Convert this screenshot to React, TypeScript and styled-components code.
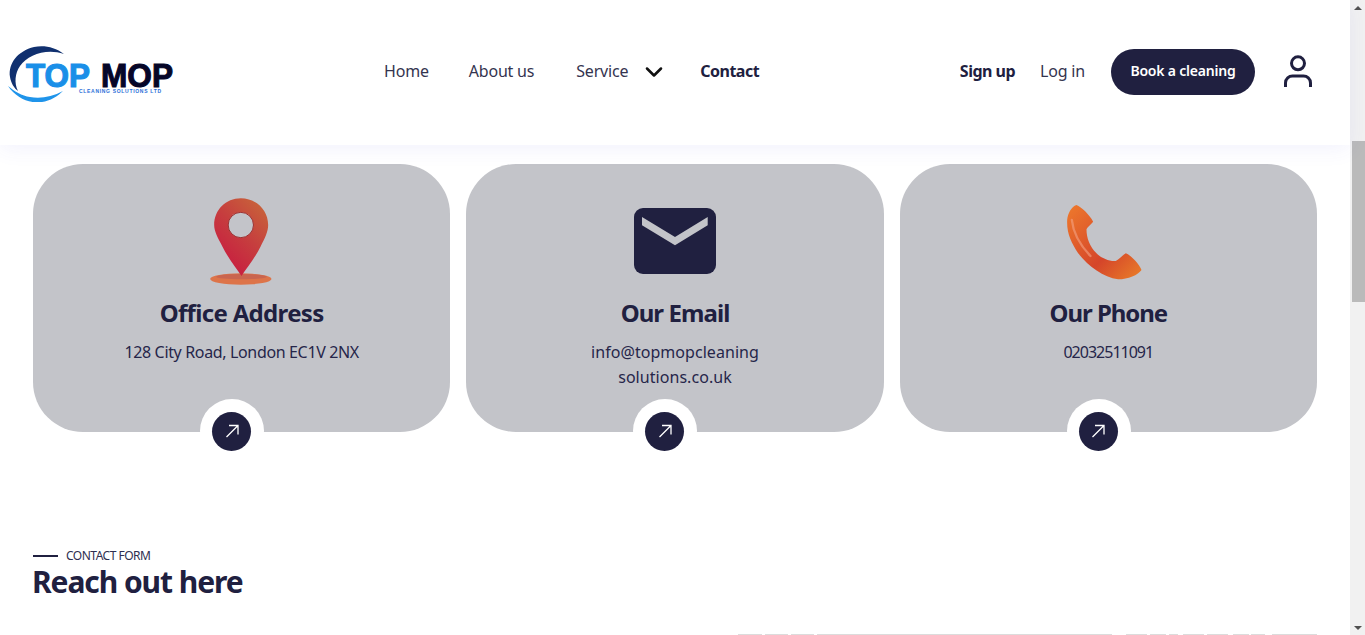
import React from 'react';
import styled, { createGlobalStyle } from 'styled-components';
import { ChevronDown } from 'lucide-react';

const navy = '#202040';
const font = '"Noto Sans", "Open Sans", sans-serif';

const GlobalStyle = createGlobalStyle`
  html, body {
    margin: 0;
    padding: 0;
    height: 100%;
    overflow: hidden;
    background: #fff;
  }
  body {
    font-family: ${font};
    color: ${navy};
  }
`;

const Shell = styled.div`
  display: flex;
  height: 635px;
  width: 1365px;
  overflow: hidden;
`;

const Page = styled.div`
  width: 1350px;
  display: flex;
  flex-direction: column;
`;

const Header = styled.header`
  height: 145px;
  flex: none;
  box-sizing: border-box;
  display: flex;
  align-items: center;
  padding: 0 36px 1px 8px;
  background: #fff;
  box-shadow: 0 4px 20px rgba(70, 70, 220, 0.07);
  position: relative;
  z-index: 2;
`;

const Logo = styled.div`
  width: 170px;
  height: 60px;
  flex: none;
`;

const Nav = styled.nav`
  display: flex;
  align-items: center;
  margin-left: 206px;
`;

const NavItem = styled.a<{ $bold?: boolean; $gap?: number }>`
  font-size: 16px;
  font-weight: ${({ $bold }) => ($bold ? 700 : 400)};
  color: ${({ $bold }) => ($bold ? navy : '#34344f')};
  margin-right: ${({ $gap }) => $gap ?? 41}px;
  padding-bottom: 2px;
  white-space: nowrap;
  letter-spacing: ${({ $bold }) => ($bold ? '-0.5px' : '-0.2px')};
`;

const Chevron = styled(ChevronDown)`
  width: 28px;
  height: 28px;
  margin: 0 32px 1px 12px;
  color: #111;
  stroke-width: 2.2;
`;

const Actions = styled.div`
  margin-left: auto;
  display: flex;
  align-items: center;
`;

const BookButton = styled.button`
  height: 46px;
  width: 144px;
  border: none;
  border-radius: 23px;
  background: ${navy};
  color: #fff;
  font-family: ${font};
  font-size: 14px;
  font-weight: 600;
  letter-spacing: -0.2px;
  margin-left: 26px;
  margin-right: 27px;
  padding: 0 0 4px;
`;

const UserIcon = styled.svg`
  width: 32px;
  height: 34px;
  display: block;
`;

const Cards = styled.section`
  display: flex;
  gap: 16px;
  padding: 19px 33px 0;
`;

const Card = styled.article`
  flex: 1;
  height: 268px;
  border-radius: 50px;
  background: #c3c4c9;
  position: relative;
  display: flex;
  flex-direction: column;
  align-items: center;
  text-align: center;
  padding-top: 32px;
  box-sizing: border-box;
`;

const IconSlot = styled.div`
  height: 92px;
  display: flex;
  align-items: center;
  justify-content: center;
`;

const CardTitle = styled.h3<{ $tracking: number }>`
  margin: 9px 0 0;
  font-size: 24px;
  line-height: 32px;
  font-weight: 700;
  letter-spacing: ${({ $tracking }) => $tracking}px;
`;

const CardText = styled.p<{ $tracking: number }>`
  margin: 11px 0 0;
  font-size: 16px;
  line-height: 25px;
  width: 280px;
  color: #26264a;
  letter-spacing: ${({ $tracking }) => $tracking}px;
`;

const Notch = styled.a`
  position: absolute;
  left: calc(50% - 41.5px);
  top: 235px;
  width: 64px;
  height: 64px;
  box-sizing: border-box;
  padding-right: 1px;
  border-radius: 50%;
  background: #fff;
  display: flex;
  align-items: center;
  justify-content: center;
`;

const NotchInner = styled.span`
  width: 39px;
  height: 39px;
  border-radius: 50%;
  background: ${navy};
  display: flex;
  align-items: center;
  justify-content: center;
`;

const FormHead = styled.section`
  padding: 116px 33px 0;
`;

const Eyebrow = styled.div`
  display: flex;
  align-items: center;
  gap: 8px;
  font-size: 12px;
  line-height: 16px;
  text-transform: uppercase;
  letter-spacing: -0.5px;
  color: #2e2e50;
  &::before {
    content: '';
    width: 25px;
    height: 2px;
    background: ${navy};
  }
`;

const Heading = styled.h2`
  margin: 1px 0 0 -1px;
  font-size: 30px;
  line-height: 34px;
  font-weight: 700;
  letter-spacing: -1.07px;
`;

const FadedRow = styled.div`
  margin: 35px 0 0 738px;
  display: flex;
`;

const FadedBit = styled.span<{ $w: number; $gap: number }>`
  width: ${({ $w }) => $w}px;
  margin-left: ${({ $gap }) => $gap}px;
  height: 1px;
  background: #dcdcdc;
  flex: none;
`;

const Scrollbar = styled.aside`
  width: 15px;
  height: 635px;
  background: #f1f1f1;
  position: relative;
  flex: none;
`;

const Thumb = styled.div`
  position: absolute;
  left: 2px;
  top: 141px;
  width: 13px;
  height: 161px;
  background: #bababa;
`;

const Arrow = styled.span<{ $down?: boolean }>`
  position: absolute;
  left: 4px;
  ${({ $down }) => ($down ? 'bottom: 5px;' : 'top: 6px;')}
  width: 0;
  height: 0;
  border-left: 4px solid transparent;
  border-right: 4px solid transparent;
  ${({ $down }) => ($down ? 'border-top: 4px solid #505050;' : 'border-bottom: 4px solid #505050;')}
`;

const TopMopLogo = () => (
  <svg width="170" height="60" viewBox="8 41 170 60">
    <path d="M64 53C55 46 44 44 34 46C18 50 8 62 10 76C11 82 14 87 18 90C14 82 15 72 20 65C28 54 46 47 64 53Z" fill="#10306f" />
    <path d="M8 85C16 97 30 103 42 101C50 100 58 95 63 90C52 96 40 98 30 96C22 95 14 90 8 85Z" fill="#1f94ea" />
    <text x="26" y="86" fontFamily="Liberation Sans" fontWeight="700" fontSize="33" fill="#1a8fe8" stroke="#1a8fe8" strokeWidth="1.2" textLength="64" lengthAdjust="spacingAndGlyphs">TOP</text>
    <text x="101" y="86" fontFamily="Liberation Sans" fontWeight="700" fontSize="33" fill="#060628" stroke="#060628" strokeWidth="1.1" textLength="72" lengthAdjust="spacingAndGlyphs">MOP</text>
    <text x="79" y="92" fontFamily="Liberation Sans" fontWeight="700" fontSize="5" fill="#2a6fd8" textLength="82" lengthAdjust="spacing">CLEANING SOLUTIONS LTD</text>
  </svg>
);

// the next three are traced from the reference at 3x, hence the large viewBox numbers
const PinIcon = () => (
  <svg width="66.67" height="90" viewBox="54.5 21 200 270">
    <defs>
      <linearGradient id="pinFill" x1="0.9" y1="0.05" x2="0.3" y2="0.9">
        <stop offset="0" stopColor="#c8643a" />
        <stop offset="0.5" stopColor="#c63f3e" />
        <stop offset="1" stopColor="#c81f40" />
      </linearGradient>
    </defs>
    <ellipse cx="153" cy="267" rx="92" ry="17" fill="#dd7449" />
    <ellipse cx="155" cy="260" rx="76" ry="8" fill="#c9654f" />
    <path
      d="M153 25C198 25 235 60 235 105C235 125 225 145 212 170C195 205 170 235 155 258C140 235 115 205 98 170C85 145 73 125 73 105C73 60 108 25 153 25Z"
      fill="url(#pinFill)"
    />
    <circle cx="153" cy="105" r="38" fill="#c3c4c9" stroke="#9c3030" strokeWidth="3" />
  </svg>
);

const MailIcon = () => (
  <svg width="82" height="68" viewBox="0 0 82 68">
    <rect x="0" y="0" width="82" height="66" rx="9" fill={navy} />
    <path d="M8 9L41 29L73.700 9V17.300L41 37.300L8 17.300Z" fill="#c3c4c9" />
  </svg>
);

const PhoneIcon = () => (
  <svg width="86.67" height="80" viewBox="45.5 36 260 240">
    <defs>
      <linearGradient id="phoneFill" x1="0" y1="0" x2="1" y2="1">
        <stop offset="0" stopColor="#ee7a2c" />
        <stop offset="0.6" stopColor="#d5452a" />
        <stop offset="1" stopColor="#ea8028" />
      </linearGradient>
    </defs>
    <path
      d="M80 45C95 52 118 72 130 95C122 105 112 112 110 118C110 145 120 170 140 190C155 205 180 215 198 213C208 208 218 195 228 190C245 197 268 222 275 240C265 255 235 268 205 268C160 262 115 228 85 190C65 160 50 130 52 90C54 70 65 50 80 45Z"
      fill="url(#phoneFill)"
    />
    <path d="M66 90C70 130 95 170 122 198" stroke="#f3a184" strokeWidth="7" fill="none" opacity="0.6" strokeLinecap="round" />
  </svg>
);

const ArrowIcon = () => (
  <svg width="16" height="16" viewBox="0 0 16 16" fill="none" stroke="#fff" strokeWidth="1.3">
    <path d="M2.500 14L14 2.500M5 2.500H14V11.500" />
  </svg>
);

const cards = [
  { title: 'Office Address', titleTracking: -0.67, textTracking: -0.35, icon: <PinIcon />, lines: ['128 City Road, London EC1V 2NX'] },
  { title: 'Our Email', titleTracking: -0.93, textTracking: 0.05, icon: <MailIcon />, lines: ['info@topmopcleaning', 'solutions.co.uk'] },
  { title: 'Our Phone', titleTracking: -1.05, textTracking: -1, icon: <PhoneIcon />, lines: ['02032511091'] },
];

// start and end x of what shows of the next section at the fold
const fadedBits = [
  [738, 762], [765, 788], [791, 814], [817, 1112], [1126, 1147], [1150, 1166],
  [1169, 1178], [1183, 1204], [1207, 1228], [1233, 1249], [1251, 1265], [1272, 1317],
];

export default function App() {
  return (
    <Shell>
      <GlobalStyle />
      <Page>
        <Header>
          <Logo>
            <TopMopLogo />
          </Logo>
          <Nav>
            <NavItem $gap={40}>Home</NavItem>
            <NavItem $gap={42}>About us</NavItem>
            <NavItem $gap={0}>Service</NavItem>
            <Chevron />
            <NavItem $bold $gap={0}>Contact</NavItem>
          </Nav>
          <Actions>
            <NavItem $bold $gap={25}>Sign up</NavItem>
            <NavItem $gap={0}>Log in</NavItem>
            <BookButton>Book a cleaning</BookButton>
            <UserIcon viewBox="0 0 32 34" fill="none" stroke={navy} strokeWidth="3">
              <circle cx="16" cy="8.300" r="6.500" />
              <path d="M3.500 32V28C3.500 23.500 7 21 10.500 21H21.500C25 21 28.500 23.500 28.500 28V32" />
            </UserIcon>
          </Actions>
        </Header>
        <Cards>
          {cards.map((card) => (
            <Card key={card.title}>
              <IconSlot>{card.icon}</IconSlot>
              <CardTitle $tracking={card.titleTracking}>{card.title}</CardTitle>
              <CardText $tracking={card.textTracking}>
                {card.lines.map((line) => (
                  <React.Fragment key={line}>
                    {line}
                    <br />
                  </React.Fragment>
                ))}
              </CardText>
              <Notch>
                <NotchInner>
                  <ArrowIcon />
                </NotchInner>
              </Notch>
            </Card>
          ))}
        </Cards>
        <FormHead>
          <Eyebrow>Contact form</Eyebrow>
          <Heading>Reach out here</Heading>
        </FormHead>
        <FadedRow>
          {fadedBits.map(([from, to], i) => (
            <FadedBit key={from} $w={to - from} $gap={i === 0 ? 0 : from - fadedBits[i - 1][1]} />
          ))}
        </FadedRow>
      </Page>
      <Scrollbar>
        <Arrow />
        <Thumb />
        <Arrow $down />
      </Scrollbar>
    </Shell>
  );
}
